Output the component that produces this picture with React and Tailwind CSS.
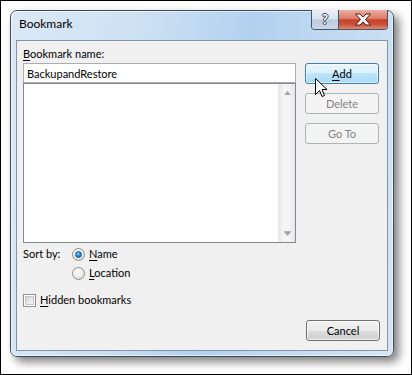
import React from "react";

function Radio({ checked }) {
  return (
    <div className="w-[13px] h-[13px] rounded-full border border-[#8e8f8f] bg-[radial-gradient(circle_at_40%_35%,#ffffff_0%,#f0f0f0_40%,#cfcfcf_100%)] flex items-center justify-center shrink-0">
      {checked && (
        <div className="w-[7px] h-[7px] rounded-full bg-[radial-gradient(circle_at_40%_35%,#8fd6ff_0%,#2a8ad4_45%,#0b4f8a_100%)] border border-[#1b5c8f]" />
      )}
    </div>
  );
}

function Btn({ children, variant = "normal" }) {
  const base =
    "w-[74px] h-[21px] rounded-[3px] border flex items-center justify-center text-[11px] leading-none";
  if (variant === "hot")
    return (
      <div
        className={
          base +
          " border-[#3c7fb1] text-black bg-[linear-gradient(to_bottom,#eaf6fd_0%,#d9f0fc_50%,#bee6fd_50%,#a7d9f5_100%)] shadow-[inset_0_0_0_1px_rgba(255,255,255,0.6)]"
        }
      >
        {children}
      </div>
    );
  if (variant === "disabled")
    return (
      <div className={base + " border-[#adb2b5] bg-[#f4f4f4] text-[#838383]"}>
        {children}
      </div>
    );
  return (
    <div
      className={
        base +
        " border-[#707070] text-black bg-[linear-gradient(to_bottom,#f2f2f2_0%,#ebebeb_50%,#dddddd_50%,#cfcfcf_100%)] shadow-[inset_0_0_0_1px_rgba(255,255,255,0.7)]"
      }
    >
      {children}
    </div>
  );
}

export default function App() {
  return (
    <div className="w-[412px] h-[375px] bg-white border border-black relative overflow-hidden pl-[9px] pt-[9px] font-['Lato','Noto_Sans',sans-serif] text-black">
      {/* window */}
      <div className="w-[384px] h-[347px] rounded-[7px] border border-[#3e4a56] bg-[linear-gradient(100deg,#dbe8f6_0%,#cde1f4_30%,#b2d1ef_55%,#c3dbf2_78%,#d6e6f6_100%)] shadow-[5px_5px_10px_rgba(0,0,0,0.5)] flex flex-col">
        <div className="rounded-[6px] flex-1 flex flex-col shadow-[inset_0_0_0_1px_rgba(255,255,255,0.55)]">
          {/* title bar */}
          <div className="h-[29px] flex items-start justify-between pl-[8px] pr-[5px] shrink-0">
            <div className="text-[12px] leading-[14px] mt-[6px] text-black">Bookmark</div>
            <div className="-mt-px flex h-[20px] border border-[#4b5664] border-t-0 rounded-b-[4px] overflow-hidden">
              <div className="w-[27px] h-full flex items-center justify-center bg-[linear-gradient(to_bottom,#e9f0f8_0%,#d6e1ee_48%,#bccbdd_52%,#c9d7e7_100%)] border-r border-[#4b5664]">
                <span className="text-[13px] leading-none font-bold text-white [text-shadow:1px_0_0_#3a4656,-1px_0_0_#3a4656,0_1px_0_#3a4656,0_-1px_0_#3a4656]">
                  ?
                </span>
              </div>
              <div className="w-[48px] h-full flex items-center justify-center bg-[linear-gradient(to_bottom,#eab0a4_0%,#dd7b66_45%,#c7412a_52%,#cc5138_75%,#e0886f_100%)]">
                <svg width="18" height="13" viewBox="0 0 18 13">
                  <path
                    d="M1.5 1 L6 1 L9 4.2 L12 1 L16.5 1 L11.5 6.5 L16.5 12 L12 12 L9 8.8 L6 12 L1.5 12 L6.5 6.5 Z"
                    fill="#ffffff"
                    stroke="#4a1a10"
                    strokeWidth="1"
                    strokeLinejoin="round"
                  />
                </svg>
              </div>
            </div>
          </div>

          {/* client area */}
          <div className="mx-[5px] mb-[5px] flex-1 border border-[#8394a7] bg-[#f0f0f0] pl-[6px] pr-[7px] pt-[6px] flex flex-col text-[11px]">
            <div className="flex gap-[9px]">
              {/* left column */}
              <div className="w-[273px] flex flex-col">
                <div className="h-[14px] leading-[14px]">
                  <span className="underline underline-offset-2">B</span>ookmark name:
                </div>
                <div className="mt-[2px] h-[20px] border border-[#abadb3] bg-white pl-[3px] flex items-center leading-none">
                  BackupandRestore
                </div>
                <div className="h-[160px] border border-[#828790] bg-white flex justify-end">
                  <div className="w-[17px] h-full flex flex-col justify-between bg-[linear-gradient(to_right,#e9e9e9_0%,#f5f5f5_30%,#f1f1f1_70%,#e6e6e6_100%)] border-l border-[#e8e8e8]">
                    <div className="h-[17px] flex items-center justify-center">
                      <svg width="7" height="4" viewBox="0 0 7 4">
                        <path d="M3.5 0 L7 4 L0 4 Z" fill="#a5a5a5" />
                      </svg>
                    </div>
                    <div className="h-[17px] flex items-center justify-center">
                      <svg width="7" height="5" viewBox="0 0 7 5">
                        <rect x="0" y="0" width="7" height="1" fill="#b5b5b5" />
                        <path d="M0 1 L7 1 L3.5 5 Z" fill="#a5a5a5" />
                      </svg>
                    </div>
                  </div>
                </div>
                <div className="mt-[3px] h-[16px] flex items-center">
                  <span className="w-[49px]">Sort by:</span>
                  <Radio checked />
                  <span className="ml-[4px]">
                    <span className="underline underline-offset-2">N</span>ame
                  </span>
                </div>
                <div className="mt-[3px] h-[16px] flex items-center pl-[49px]">
                  <Radio />
                  <span className="ml-[4px]">
                    <span className="underline underline-offset-2">L</span>ocation
                  </span>
                </div>
                <div className="mt-[11px] h-[16px] flex items-center">
                  <div className="w-[13px] h-[13px] border border-[#8e8f8f] bg-white p-px shrink-0">
                    <div className="w-full h-full bg-[linear-gradient(135deg,#d3d3d3_0%,#e6e6e6_50%,#f6f6f6_100%)] border border-[#c6c6c6]" />
                  </div>
                  <span className="ml-[4px]">
                    <span className="underline underline-offset-2">H</span>idden bookmarks
                  </span>
                </div>
              </div>
              {/* right column */}
              <div className="w-[74px] pt-[16px] flex flex-col gap-[9px]">
                <Btn variant="hot">
                  <span className="underline underline-offset-2">A</span>dd
                </Btn>
                <Btn variant="disabled">Delete</Btn>
                <Btn variant="disabled">Go To</Btn>
              </div>
            </div>
            <div className="mt-[12px] flex justify-end">
              <Btn>Cancel</Btn>
            </div>
          </div>
        </div>
      </div>

      {/* mouse cursor */}
      <svg
        className="absolute left-[314px] top-[77px]"
        width="13"
        height="21"
        viewBox="0 0 13 21"
      >
        <path
          d="M0.5 0.5 L0.5 16.5 L4.5 12.5 L7 18.5 L9.5 17.5 L7 11.5 L12 11.5 Z"
          fill="#ffffff"
          stroke="#000000"
          strokeWidth="1"
          strokeLinejoin="miter"
        />
      </svg>
    </div>
  );
}
